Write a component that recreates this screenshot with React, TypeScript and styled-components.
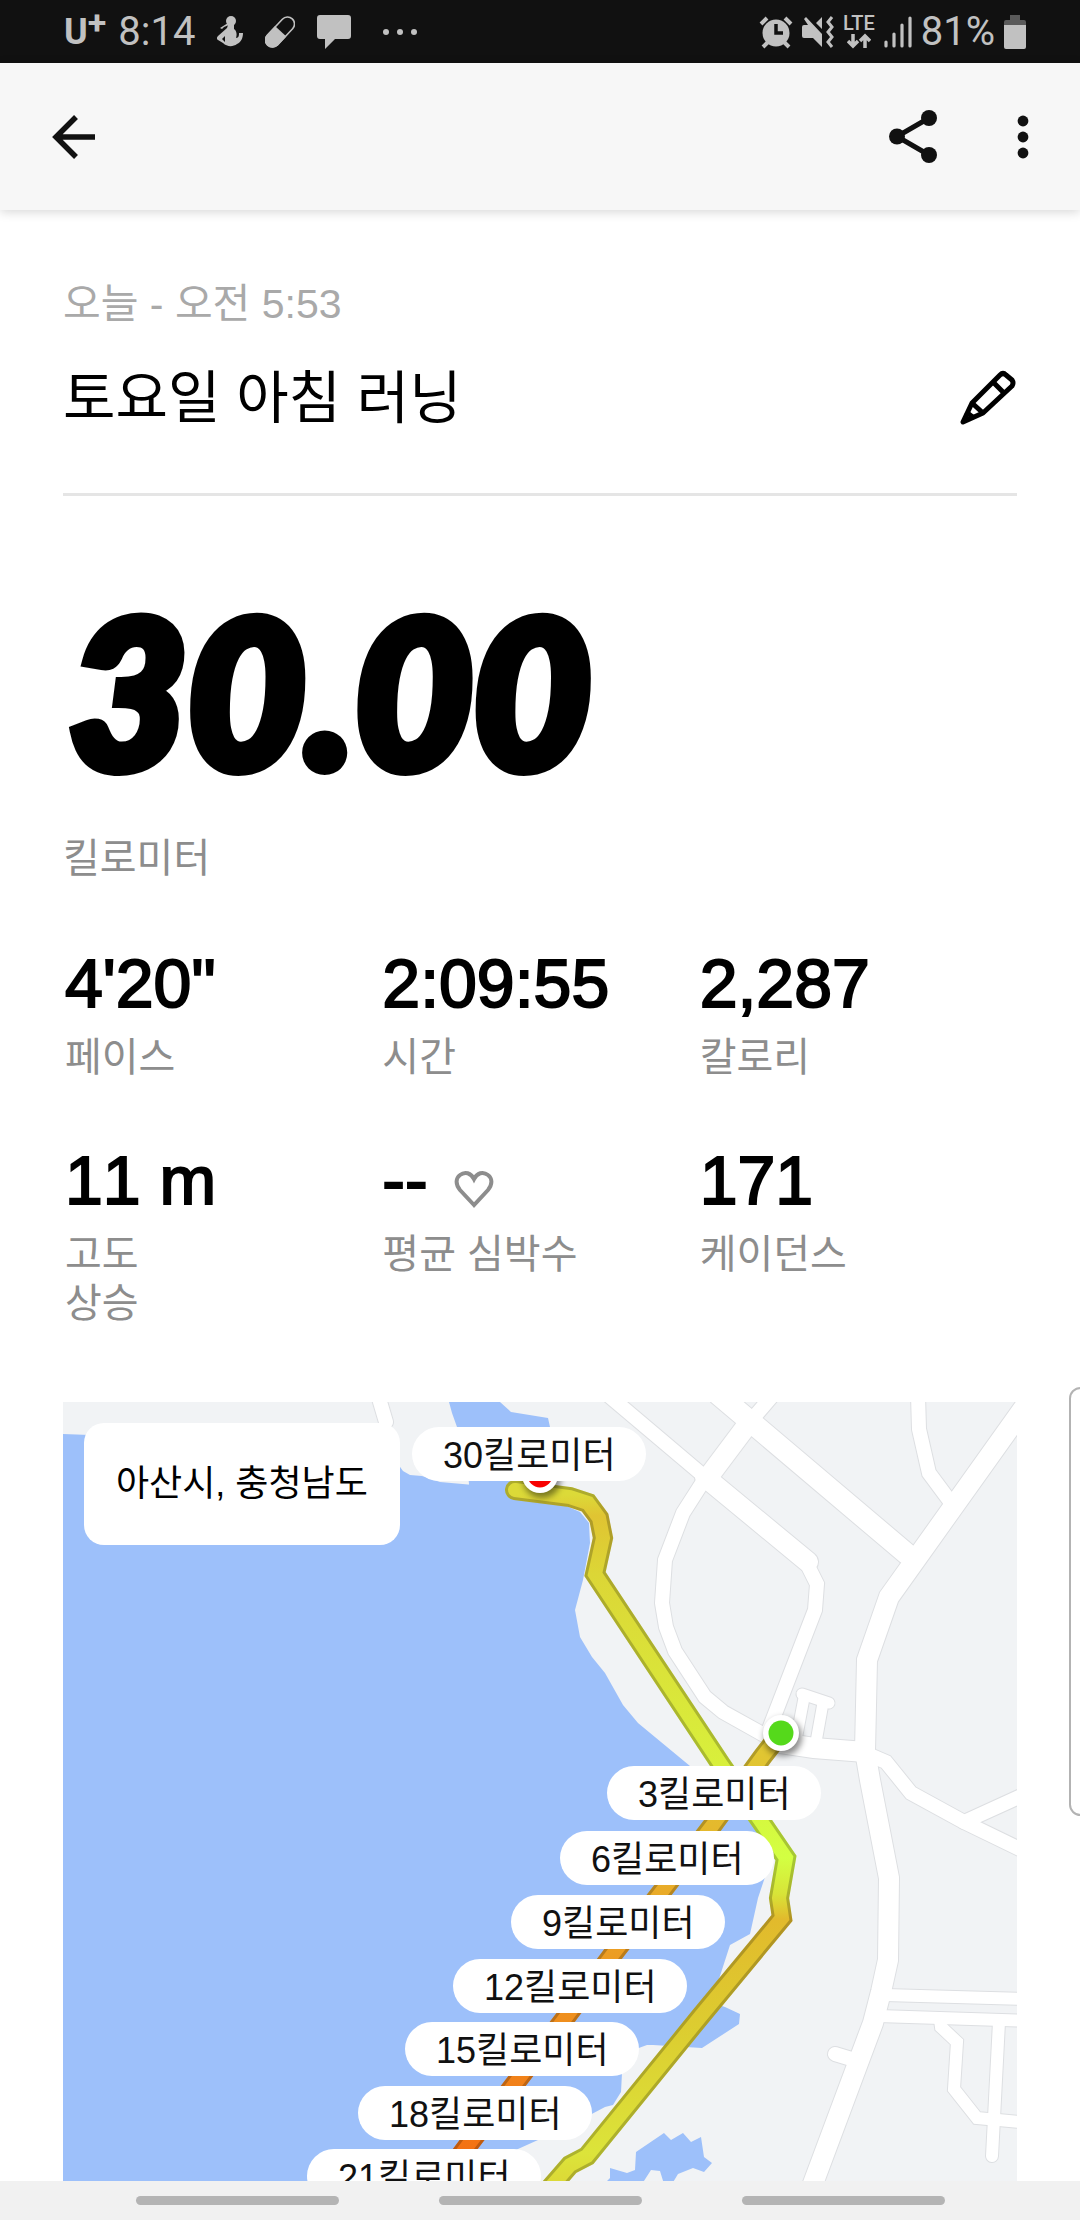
import React from "react";
import styled, { createGlobalStyle } from "styled-components";

const sans = `"Liberation Sans", "Noto Sans CJK KR", sans-serif`;

const GlobalStyle = createGlobalStyle`
  * { box-sizing: border-box; }
  body { margin: 0; background: #fff; color: #000; font-family: ${sans}; }
  button { border: 0; padding: 0; background: none; color: inherit; font: inherit; cursor: pointer; }
  svg { display: block; }
`;

const Screen = styled.div`
  display: flex;
  flex-direction: column;
  height: 100vh;
`;

const StatusBar = styled.div`
  flex: none;
  display: flex;
  align-items: center;
  justify-content: space-between;
  height: 63px;
  padding: 0 54px 0 64px;
  background: #111;
  color: #c1c1c1;
  font-family: Roboto, sans-serif;
  font-size: 40px;
`;

const StatusGroup = styled.div<{ $gap: number }>`
  display: flex;
  align-items: center;
  gap: ${(p) => p.$gap}px;
`;

const Carrier = styled.span`
  display: flex;
  font-weight: 700;
  font-size: 36px;
  line-height: 40px;
`;

const CarrierPlus = styled.sup`
  font-size: 34px;
  line-height: 20px;
`;

const Network = styled.span`
  display: flex;
  flex-direction: column;
  align-items: center;
  gap: 2px;
  font-size: 20px;
  font-weight: 500;
  line-height: 16px;
`;

const AppBar = styled.header`
  flex: none;
  z-index: 1;
  display: flex;
  align-items: center;
  justify-content: space-between;
  height: 147px;
  padding: 0 17px 0 34px;
  background: #f7f7f7;
  color: #111;
  box-shadow: 0 2px 10px rgba(0, 0, 0, 0.16);
`;

const Actions = styled.div`
  display: flex;
  gap: 30px;
`;

const IconButton = styled.button`
  display: grid;
  place-items: center;
  width: 80px;
  height: 80px;
`;

const Content = styled.main`
  flex: 1;
  min-height: 0;
  overflow-y: auto;
  scrollbar-width: none;
  padding: 64px 63px;
`;

const RunHeader = styled.section`
  padding-bottom: 55px;
  border-bottom: 3px solid #e5e5e5;
`;

const DateLine = styled.p`
  margin: 0;
  font-size: 41px;
  line-height: 60px;
  color: #a9a9a9;
`;

const TitleRow = styled.div`
  display: flex;
  align-items: center;
  justify-content: space-between;
  margin-top: 24px;
`;

const Title = styled.h1`
  margin: 0;
  font-size: 57px;
  font-weight: 400;
  line-height: 80px;
`;

const EditButton = styled.button`
  display: flex;
`;

const Distance = styled.p`
  margin: 93px 0 0;
  padding-left: 6px;
  font-family: Lato, sans-serif;
  font-size: 204px;
  font-style: italic;
  font-weight: 900;
  line-height: 200px;
  -webkit-text-stroke: 12px #000;
`;

const Label = styled.p`
  margin: 0;
  font-size: 40px;
  line-height: 49px;
  color: #8d8d8d;
`;

const DistanceLabel = styled(Label)`
  margin-top: 45px;
`;

const Stats = styled.div`
  display: grid;
  grid-template-columns: repeat(3, 1fr);
  row-gap: 58px;
  margin: 60px 0 74px;
  padding-left: 2px;
`;

const Value = styled.p`
  display: flex;
  align-items: center;
  gap: 26px;
  margin: 0 0 10px;
  font-size: 68px;
  line-height: 80px;
  font-kerning: none;
  -webkit-text-stroke: 2px #000;
`;

const MapCard = styled.section`
  position: relative;
  aspect-ratio: 1;
  overflow: hidden;
  background: #f1f3f5;
`;

const Place = styled.div`
  position: absolute;
  top: 21px;
  left: 21px;
  padding: 31px 32px;
  border-radius: 20px;
  background: #fff;
  font-size: 36px;
  line-height: 60px;
`;

const Marker = styled.span<{ $x: number; $y: number }>`
  position: absolute;
  left: ${(p) => (p.$x / 954) * 100}%;
  top: ${(p) => (p.$y / 954) * 100}%;
  padding: 4px 30px 0 31px;
  border-radius: 27px;
  background: #fff;
  color: #111;
  font-size: 36px;
  line-height: 50px;
  white-space: nowrap;
`;

const EdgePanel = styled.button`
  position: fixed;
  top: 1387px;
  right: -12px;
  width: 23px;
  height: 429px;
  border: 2px solid #b3b3b3;
  border-radius: 14px;
  background: #fff;
`;

const NavBar = styled.nav`
  flex: none;
  display: flex;
  align-items: center;
  justify-content: center;
  gap: 100px;
  height: 39px;
  background: #f1f1f1;
`;

const NavButton = styled.button`
  width: 203px;
  height: 9px;
  border-radius: 5px;
  background: #b4b4b4;
`;

const HeartSlot = styled.span`
  padding-top: 18px;
`;

const SwimmerIcon = () => (
  <svg width="26" height="32" viewBox="0 0 26 32" fill="currentColor">
    <circle cx="14" cy="5" r="5" />
    <path d="M11 9h6v4c3 2 3 6 2 9 3 0 3-3 3-5h4c0 5-2 9-6 11-4 3-10 3-14-1l-5-3c-2-1-1-3 0-4l9-8zM8 20l-3 3 3 3z" fillRule="evenodd" />
    <path d="M3 12l8-5 1 2-5 2-2 2z" />
  </svg>
);

const PillIcon = () => (
  <svg width="30" height="32" viewBox="0 0 30 32">
    <g transform="rotate(43 15 16)">
      <rect x="8" y="-2" width="14" height="36" rx="7" fill="none" stroke="currentColor" strokeWidth="1.6" />
      <path d="M7.200 15h15.600v12a7.800 7.800 0 0 1-15.600 0z" fill="currentColor" />
    </g>
  </svg>
);

const ChatIcon = () => (
  <svg width="34" height="34" viewBox="0 0 34 34" fill="currentColor">
    <path d="M3 0h28a3 3 0 0 1 3 3v18a3 3 0 0 1-3 3H18L8 34V24H3a3 3 0 0 1-3-3V3a3 3 0 0 1 3-3z" />
  </svg>
);

const MoreIcon = () => (
  <svg width="45" height="8" viewBox="-9 0 45 8" fill="currentColor">
    <circle cx="4" cy="4" r="3" />
    <circle cx="18" cy="4" r="3" />
    <circle cx="32" cy="4" r="3" />
  </svg>
);

const AlarmIcon = () => (
  <svg width="34" height="34" viewBox="0 0 34 34">
    <circle cx="17" cy="18" r="13.500" fill="currentColor" />
    <path d="M2 9l6-6M32 9l-6-6M4 32l5-5M30 32l-5-5" stroke="currentColor" strokeWidth="4" />
    <path d="M17 9v9h7" stroke="#111" strokeWidth="3.500" fill="none" />
  </svg>
);

const MuteIcon = () => (
  <svg width="32" height="34" viewBox="0 0 32 34">
    <path d="M0 12q0-2 2-2h4L2 4l2-2 16 17v13l-9-9H2q-2 0-2-2zM14 8l6-6v12z" fill="currentColor" />
    <path d="M30 2l-4 5 4 5-4 5 4 5-4 5 4 5" stroke="currentColor" strokeWidth="3" fill="none" />
  </svg>
);

const DataArrows = () => (
  <svg width="24" height="16" viewBox="0 0 24 16">
    <path d="M6 1v12M1 8l5 5 5-5M18 15V3M13 8l5-5 5 5" stroke="currentColor" strokeWidth="3.500" fill="none" />
  </svg>
);

const SignalIcon = () => (
  <svg width="28" height="32" viewBox="0 0 28 32">
    <path d="M2 26v4M10 18v12M18 9v21M26 2v28" stroke="currentColor" strokeWidth="3.200" strokeLinecap="round" />
  </svg>
);

const BatteryIcon = () => (
  <svg width="22" height="34" viewBox="0 0 22 34">
    <path d="M6 0h10v5h4q2 0 2 2v4H0V7q0-2 2-2h4z" fill="#5a5a5a" />
    <path d="M0 10h22v22q0 2-2 2H2q-2 0-2-2z" fill="currentColor" />
  </svg>
);

const BackIcon = () => (
  <svg width="46" height="46" viewBox="0 0 46 46" fill="none" stroke="currentColor" strokeWidth="5.500">
    <path d="M44 23H6M25 3L5 23l20 20" />
  </svg>
);

const ShareIcon = () => (
  <svg width="50" height="56" viewBox="0 0 50 56" fill="currentColor">
    <path d="M41 9L9 27.500 41 46" fill="none" stroke="currentColor" strokeWidth="5" />
    <circle cx="41" cy="9" r="8" />
    <circle cx="9" cy="27.500" r="8" />
    <circle cx="41" cy="46" r="8" />
  </svg>
);

const MenuIcon = () => (
  <svg width="12" height="46" viewBox="0 0 12 46" fill="currentColor">
    <circle cx="6" cy="7" r="5.400" />
    <circle cx="6" cy="23" r="5.400" />
    <circle cx="6" cy="39" r="5.400" />
  </svg>
);

const PencilIcon = () => (
  <svg width="58" height="58" viewBox="0 0 58 58" fill="none" stroke="#000" strokeWidth="5" strokeLinejoin="round">
    <path d="M4 53L13 34L41 6q3-3 6 0l6 5q2 3 0 6L24 44z" />
    <path d="M34 13l11 11M13 34l11 10M7 43l8 6" />
  </svg>
);

const HeartIcon = () => (
  <svg width="40" height="38" viewBox="0 0 40 38" fill="none" stroke="#8d8d8d" strokeWidth="4">
    <path d="M20 35L6 20C1 14 2 8 6 5c5-4 11-2 14 4 3-6 9-8 14-4 4 3 5 9 0 15z" />
  </svg>
);

const roads: { d: string; w: number }[] = [
  { d: "M378 1395L386 1422", w: 14 },
  { d: "M608 1395L705 1477", w: 14 },
  { d: "M705 1477L808 1562", w: 20 },
  { d: "M808 1566L817 1584L815 1610L768 1732", w: 14 },
  { d: "M773 1395L743 1430", w: 14 },
  { d: "M748 1424L709 1476", w: 20 },
  { d: "M706 1477L683 1513L665 1560L662 1603L666 1627L675 1651L705 1697L723 1712L775 1741", w: 14 },
  { d: "M719 1395L907 1554", w: 21 },
  { d: "M1033 1395L889 1597L867 1660L865 1751L870 1780L889 1878L888 1960L881 1992L873 2023L814 2181L747 2360", w: 20 },
  { d: "M918 1395L919 1429L929 1473L955 1508", w: 14 },
  { d: "M774 1742L814 1748L865 1752", w: 20 },
  { d: "M865 1753L886 1762L911 1793L964 1822L1030 1854", w: 14 },
  { d: "M964 1822L1030 1792", w: 14 },
  { d: "M802 1694L829 1703", w: 11 },
  { d: "M804 1698L796 1740", w: 11 },
  { d: "M823 1703L816 1742", w: 11 },
  { d: "M885 1995L1030 1999", w: 12 },
  { d: "M878 2016L1030 2021", w: 12 },
  { d: "M940 2020L941 2027L957 2042L954 2089L977 2118L1030 2123", w: 12 },
  { d: "M999 2022L994 2118L992 2156", w: 12 },
  { d: "M835 2054L858 2061", w: 14 },
];

const Roads = () => (
  <g fill="none" strokeLinecap="round">
    {roads.map((r) => (
      <path key={r.d} d={r.d} stroke="#dddfe2" strokeWidth={r.w + 2} />
    ))}
    {roads.map((r) => (
      <path key={r.d} d={r.d} stroke="#fff" strokeWidth={r.w} />
    ))}
  </g>
);

const Track = ({ d, paint }: { d: string; paint: string }) => (
  <g fill="none" strokeLinecap="round">
    <path d={d} stroke={`url(#${paint})`} strokeWidth="20" />
    <path d={d} stroke="#000" strokeOpacity="0.21" strokeWidth="20" />
    <path d={d} stroke={`url(#${paint})`} strokeWidth="14" />
  </g>
);

const Dot = ({ x, y, color }: { x: number; y: number; color: string }) => (
  <g>
    <circle cx={x + 2} cy={y + 4} r="19" fill="#000" fillOpacity="0.45" filter="url(#soft)" />
    <circle cx={x} cy={y} r="18" fill="#fff" />
    <circle cx={x} cy={y} r="12.500" fill={color} />
  </g>
);

const MapDrawing = () => (
  <svg width="100%" height="100%" viewBox="63 1402 954 954" role="img" aria-label="러닝 경로 지도">
    <defs>
      <filter id="soft" x="-50%" y="-50%" width="200%" height="200%">
        <feGaussianBlur stdDeviation="3" />
      </filter>
      <linearGradient id="back" gradientUnits="userSpaceOnUse" x1="0" y1="1480" x2="0" y2="2200">
        <stop offset="0.020" stopColor="#dcda38" />
        <stop offset="0.050" stopColor="#e0c432" />
        <stop offset="0.130" stopColor="#dcd636" />
        <stop offset="0.400" stopColor="#d8f03c" />
        <stop offset="0.525" stopColor="#d3ff42" />
        <stop offset="0.575" stopColor="#d8e438" />
        <stop offset="0.610" stopColor="#e2ba2c" />
        <stop offset="0.780" stopColor="#dccf31" />
        <stop offset="0.935" stopColor="#dce43a" />
        <stop offset="1" stopColor="#dcd234" />
      </linearGradient>
      <linearGradient id="out" gradientUnits="userSpaceOnUse" x1="0" y1="1733" x2="0" y2="2200">
        <stop offset="0" stopColor="#e0ca34" />
        <stop offset="0.200" stopColor="#e4b92d" />
        <stop offset="0.340" stopColor="#e9ab28" />
        <stop offset="0.610" stopColor="#ef8f1e" />
        <stop offset="1" stopColor="#f56710" />
      </linearGradient>
    </defs>
    <g fill="#9dc0fa">
      <path d="M60 1434L90 1435L395 1460L403 1471L410 1475L422 1476L440 1482L530 1490L580 1512L589 1523L590 1543L583 1580L575 1610L580 1637L592 1657L605 1673L623 1705L638 1723L690 1766L760 1808L772 1840L772 1860L765 1877L758 1898L750 1934L730 1945L720 1976L710 2002L725 2007L740 2014L739 2024L702 2048L653 2045L647 2045L636 2049L622 2073L621 2092L613 2105L605 2107L588 2116L538 2140L518 2149L480 2170L430 2360L60 2360z" />
      <path d="M449 1402H500L511 1412L548 1418L550 1427L548 1500L470 1495L465 1440L457 1427L452 1413z" />
      <path d="M604 2184L610 2178V2168L627 2173L635 2170L636 2152L664 2133L671 2140L683 2133L691 2142L701 2137L704 2157L712 2163L704 2172L693 2168L678 2174L672 2184H664L660 2171L651 2170L642 2184z" />
    </g>
    <Roads />
    <Track paint="out" d="M781 1733L763 1756L712 1826L663 1890L613 1954L566 2017L517 2081L469 2144L330 2330" />
    <Track paint="back" d="M515 1490L570 1497L588 1503L599 1518L603 1538L595 1574L722 1766L760 1820L786 1858L779 1898L782 1918L700 2017L587 2156L570 2165L470 2280" />
    <Dot x={540} y={1475} color="#f80000" />
    <Dot x={781} y={1733} color="#55d91b" />
  </svg>
);

const markers = [
  { km: 30, x: 349, y: 25 },
  { km: 3, x: 544, y: 364 },
  { km: 6, x: 497, y: 429 },
  { km: 9, x: 448, y: 493 },
  { km: 12, x: 390, y: 557 },
  { km: 15, x: 342, y: 620 },
  { km: 18, x: 295, y: 684 },
  { km: 21, x: 244, y: 747 },
];

const stats: { value: React.ReactNode; label: React.ReactNode }[] = [
  { value: `4'20"`, label: "페이스" },
  { value: "2:09:55", label: "시간" },
  { value: "2,287", label: "칼로리" },
  { value: "11 m", label: <>고도<br />상승</> },
  { value: <>--<HeartSlot><HeartIcon /></HeartSlot></>, label: "평균 심박수" },
  { value: "171", label: "케이던스" },
];

export default function App() {
  return (
    <Screen>
      <GlobalStyle />
      <StatusBar>
        <StatusGroup $gap={22}>
          <StatusGroup $gap={12}>
            <Carrier>U<CarrierPlus>+</CarrierPlus></Carrier>
            <span>8:14</span>
          </StatusGroup>
          <SwimmerIcon />
          <PillIcon />
          <ChatIcon />
          <MoreIcon />
        </StatusGroup>
        <StatusGroup $gap={9}>
          <AlarmIcon />
          <MuteIcon />
          <Network>LTE<DataArrows /></Network>
          <SignalIcon />
          <span>81%</span>
          <BatteryIcon />
        </StatusGroup>
      </StatusBar>
      <AppBar>
        <IconButton aria-label="뒤로"><BackIcon /></IconButton>
        <Actions>
          <IconButton aria-label="공유"><ShareIcon /></IconButton>
          <IconButton aria-label="더보기"><MenuIcon /></IconButton>
        </Actions>
      </AppBar>
      <Content>
        <RunHeader>
          <DateLine>오늘 - 오전 5:53</DateLine>
          <TitleRow>
            <Title>토요일 아침 러닝</Title>
            <EditButton aria-label="이름 편집"><PencilIcon /></EditButton>
          </TitleRow>
        </RunHeader>
        <Distance>30.00</Distance>
        <DistanceLabel>킬로미터</DistanceLabel>
        <Stats>
          {stats.map((s, i) => (
            <div key={i}>
              <Value>{s.value}</Value>
              <Label>{s.label}</Label>
            </div>
          ))}
        </Stats>
        <MapCard>
          <MapDrawing />
          {markers.map((m) => (
            <Marker key={m.km} $x={m.x} $y={m.y}>{m.km}킬로미터</Marker>
          ))}
          <Place>아산시, 충청남도</Place>
        </MapCard>
      </Content>
      <EdgePanel aria-label="엣지 패널" />
      <NavBar>
        <NavButton aria-label="최근 앱" />
        <NavButton aria-label="홈" />
        <NavButton aria-label="이전" />
      </NavBar>
    </Screen>
  );
}
